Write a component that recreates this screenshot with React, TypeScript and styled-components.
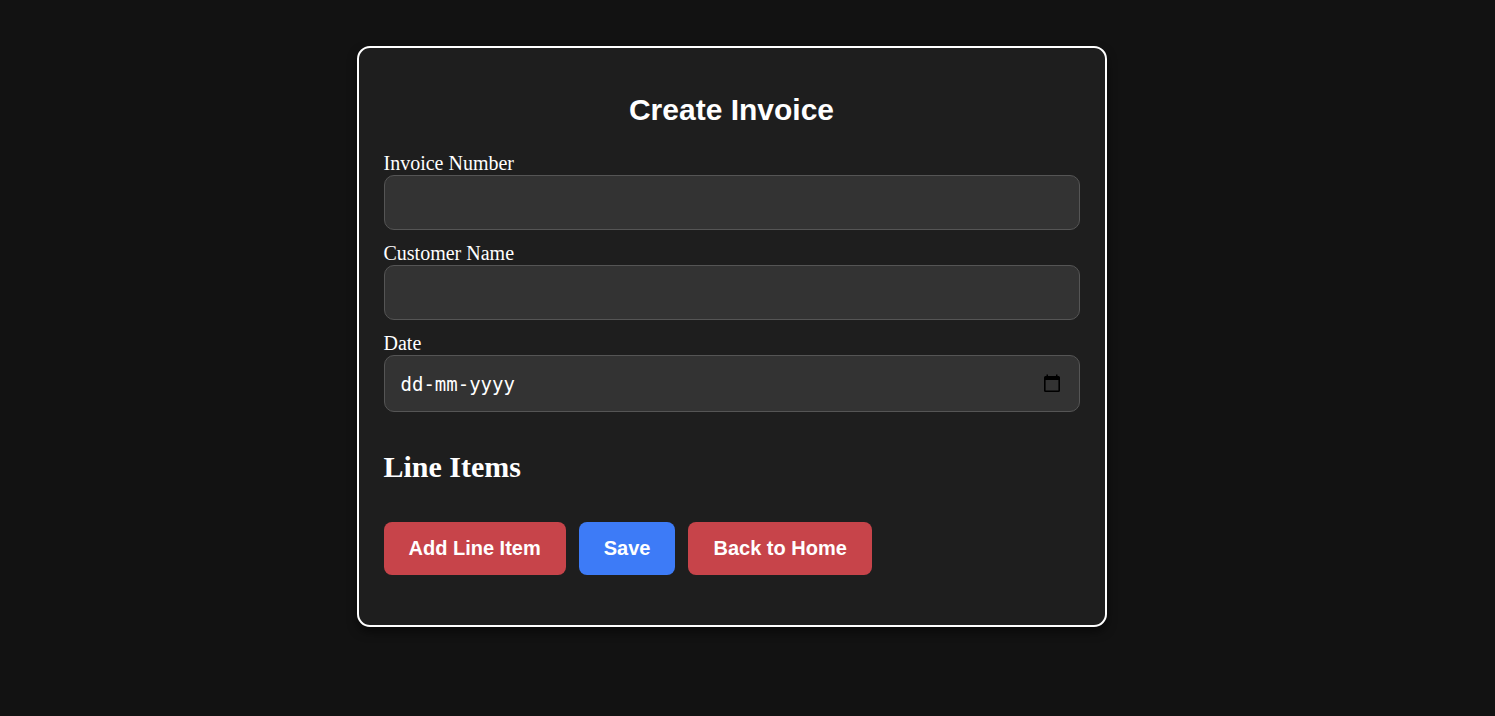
import React, { useRef } from "react";
import styled, { createGlobalStyle } from "styled-components";

const GlobalStyle = createGlobalStyle`
  *, *::before, *::after {
    box-sizing: border-box;
  }
  body {
    margin: 0;
    background: #121212;
    color: #ffffff;
    font-family: "Liberation Serif", "Times New Roman", serif;
    font-size: 20px;
  }
`;

const Page = styled.main`
  padding: 46px 32px 46px 0;
`;

const Card = styled.form`
  max-width: 750px;
  margin: 0 auto;
  padding: 42px 25px 50px;
  background: #1e1e1e;
  border: 2px solid #ffffff;
  border-radius: 13px;
  box-shadow: 0 5px 10px rgba(0, 0, 0, 0.5);
`;

const Title = styled.h1`
  margin: 0 0 22px;
  font-family: "Liberation Sans", Arial, sans-serif;
  font-size: 30px;
  line-height: 40px;
  text-align: center;
`;

const Field = styled.div`
  margin-bottom: 12px;
`;

const Label = styled.label`
  display: block;
  line-height: 23px;
`;

const Control = styled.input<{ $tall?: boolean }>`
  display: block;
  width: 100%;
  height: ${({ $tall }) => ($tall ? 57 : 55)}px;
  padding: 0 16px;
  color: #ffffff;
  background: #333333;
  border: 1px solid #555555;
  border-radius: 10px;
  font-family: ${({ $tall }) =>
    $tall ? '"DejaVu Sans Mono", monospace' : '"Liberation Sans", Arial, sans-serif'};
  font-size: 19px;

  &::placeholder {
    color: #ffffff;
    opacity: 1;
  }
`;

const DateBox = styled.div`
  position: relative;
`;

const CalendarButton = styled.button`
  position: absolute;
  top: 0;
  bottom: 0;
  right: 16px;
  display: flex;
  align-items: center;
  padding: 0;
  color: #000000;
  background: none;
  border: 0;
  cursor: pointer;
`;

const SectionTitle = styled.h2`
  margin: 37px 0;
  font-size: 30px;
  line-height: 36px;
`;

const Actions = styled.div`
  display: flex;
  flex-wrap: wrap;
  gap: 13px;
`;

const Button = styled.button<{ $primary?: boolean }>`
  padding: 15px 25px;
  color: #ffffff;
  background: ${({ $primary }) => ($primary ? "#3d7bf7" : "#c7444a")};
  border: 0;
  border-radius: 8px;
  font-family: "Liberation Sans", Arial, sans-serif;
  font-size: 20px;
  font-weight: 700;
  line-height: 23px;
  cursor: pointer;
`;

export default function App() {
  const dateRef = useRef<HTMLInputElement>(null);

  return (
    <>
      <GlobalStyle />
      <Page>
        <Card onSubmit={(event) => event.preventDefault()}>
          <Title>Create Invoice</Title>
          <Field>
            <Label htmlFor="invoice-number">Invoice Number</Label>
            <Control id="invoice-number" type="text" />
          </Field>
          <Field>
            <Label htmlFor="customer-name">Customer Name</Label>
            <Control id="customer-name" type="text" />
          </Field>
          <Field>
            <Label htmlFor="invoice-date">Date</Label>
            <DateBox>
              <Control ref={dateRef} id="invoice-date" type="text" placeholder="dd-mm-yyyy" $tall />
              <CalendarButton type="button" aria-label="Choose date" onClick={() => dateRef.current?.focus()}>
                <svg width="24" height="20" viewBox="0 0 24 20" aria-hidden="true">
                  <path
                    fill="currentColor"
                    fillRule="evenodd"
                    d="M6.500 .5h1.500v1.500h8V.5h1.500v1.500h1a1.500 1.500 0 0 1 1.500 1.500v13a1.500 1.500 0 0 1-1.500 1.500h-13A1.500 1.500 0 0 1 4 16.500v-13A1.500 1.500 0 0 1 5.500 2h1zM5.600 6v10.400h12.800V6z"
                  />
                </svg>
              </CalendarButton>
            </DateBox>
          </Field>
          <SectionTitle>Line Items</SectionTitle>
          <Actions>
            <Button type="button">Add Line Item</Button>
            <Button type="submit" $primary>
              Save
            </Button>
            <Button type="button">Back to Home</Button>
          </Actions>
        </Card>
      </Page>
    </>
  );
}
